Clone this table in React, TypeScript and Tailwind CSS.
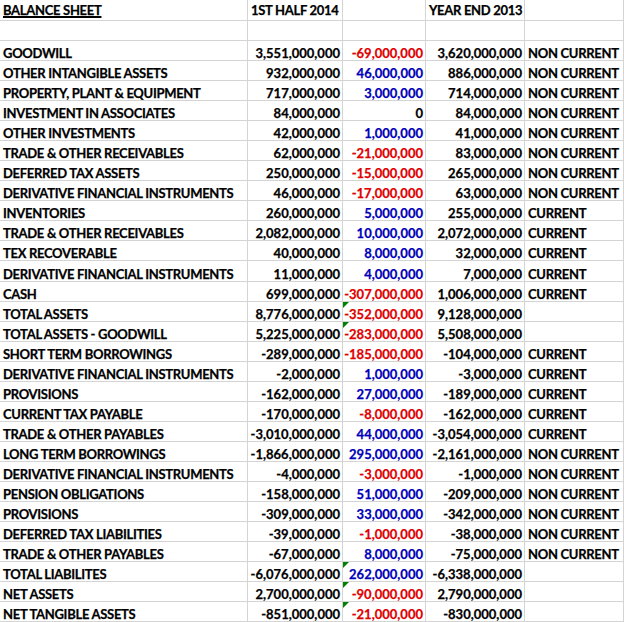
type Tone = "red" | "blue" | "black";

interface Row {
  label: string;
  half: string;
  diff: string;
  tone: Tone;
  year: string;
  kind?: string;
  flag?: boolean;
  tall?: boolean;
}

const rows: Row[] = [
  { label: "GOODWILL", half: "3,551,000,000", diff: "-69,000,000", tone: "red", year: "3,620,000,000", kind: "NON CURRENT" },
  { label: "OTHER INTANGIBLE ASSETS", half: "932,000,000", diff: "46,000,000", tone: "blue", year: "886,000,000", kind: "NON CURRENT" },
  { label: "PROPERTY, PLANT & EQUIPMENT", half: "717,000,000", diff: "3,000,000", tone: "blue", year: "714,000,000", kind: "NON CURRENT" },
  { label: "INVESTMENT IN ASSOCIATES", half: "84,000,000", diff: "0", tone: "black", year: "84,000,000", kind: "NON CURRENT" },
  { label: "OTHER INVESTMENTS", half: "42,000,000", diff: "1,000,000", tone: "blue", year: "41,000,000", kind: "NON CURRENT" },
  { label: "TRADE & OTHER RECEIVABLES", half: "62,000,000", diff: "-21,000,000", tone: "red", year: "83,000,000", kind: "NON CURRENT" },
  { label: "DEFERRED TAX ASSETS", half: "250,000,000", diff: "-15,000,000", tone: "red", year: "265,000,000", kind: "NON CURRENT" },
  { label: "DERIVATIVE FINANCIAL INSTRUMENTS", half: "46,000,000", diff: "-17,000,000", tone: "red", year: "63,000,000", kind: "NON CURRENT" },
  { label: "INVENTORIES", half: "260,000,000", diff: "5,000,000", tone: "blue", year: "255,000,000", kind: "CURRENT" },
  { label: "TRADE & OTHER RECEIVABLES", half: "2,082,000,000", diff: "10,000,000", tone: "blue", year: "2,072,000,000", kind: "CURRENT" },
  { label: "TEX RECOVERABLE", half: "40,000,000", diff: "8,000,000", tone: "blue", year: "32,000,000", kind: "CURRENT" },
  { label: "DERIVATIVE FINANCIAL INSTRUMENTS", half: "11,000,000", diff: "4,000,000", tone: "blue", year: "7,000,000", kind: "CURRENT", tall: true },
  { label: "CASH", half: "699,000,000", diff: "-307,000,000", tone: "red", year: "1,006,000,000", kind: "CURRENT" },
  { label: "TOTAL ASSETS", half: "8,776,000,000", diff: "-352,000,000", tone: "red", year: "9,128,000,000", flag: true },
  { label: "TOTAL ASSETS - GOODWILL", half: "5,225,000,000", diff: "-283,000,000", tone: "red", year: "5,508,000,000", flag: true },
  { label: "SHORT TERM BORROWINGS", half: "-289,000,000", diff: "-185,000,000", tone: "red", year: "-104,000,000", kind: "CURRENT" },
  { label: "DERIVATIVE FINANCIAL INSTRUMENTS", half: "-2,000,000", diff: "1,000,000", tone: "blue", year: "-3,000,000", kind: "CURRENT" },
  { label: "PROVISIONS", half: "-162,000,000", diff: "27,000,000", tone: "blue", year: "-189,000,000", kind: "CURRENT" },
  { label: "CURRENT TAX PAYABLE", half: "-170,000,000", diff: "-8,000,000", tone: "red", year: "-162,000,000", kind: "CURRENT" },
  { label: "TRADE & OTHER PAYABLES", half: "-3,010,000,000", diff: "44,000,000", tone: "blue", year: "-3,054,000,000", kind: "CURRENT" },
  { label: "LONG TERM BORROWINGS", half: "-1,866,000,000", diff: "295,000,000", tone: "blue", year: "-2,161,000,000", kind: "NON CURRENT" },
  { label: "DERIVATIVE FINANCIAL INSTRUMENTS", half: "-4,000,000", diff: "-3,000,000", tone: "red", year: "-1,000,000", kind: "NON CURRENT" },
  { label: "PENSION OBLIGATIONS", half: "-158,000,000", diff: "51,000,000", tone: "blue", year: "-209,000,000", kind: "NON CURRENT" },
  { label: "PROVISIONS", half: "-309,000,000", diff: "33,000,000", tone: "blue", year: "-342,000,000", kind: "NON CURRENT" },
  { label: "DEFERRED TAX LIABILITIES", half: "-39,000,000", diff: "-1,000,000", tone: "red", year: "-38,000,000", kind: "NON CURRENT" },
  { label: "TRADE & OTHER PAYABLES", half: "-67,000,000", diff: "8,000,000", tone: "blue", year: "-75,000,000", kind: "NON CURRENT" },
  { label: "TOTAL LIABILITES", half: "-6,076,000,000", diff: "262,000,000", tone: "blue", year: "-6,338,000,000", flag: true },
  { label: "NET ASSETS", half: "2,700,000,000", diff: "-90,000,000", tone: "red", year: "2,790,000,000", flag: true },
  { label: "NET TANGIBLE ASSETS", half: "-851,000,000", diff: "-21,000,000", tone: "red", year: "-830,000,000", flag: true },
];

const toneClass: Record<Tone, string> = {
  red: "text-[#e00000]",
  blue: "text-[#0000b8]",
  black: "text-black",
};

const grid = "grid grid-cols-[248px_95px_83px_99px_99px]";
const cell = "border-r border-b border-[#d4d4d4] flex items-end whitespace-nowrap overflow-hidden";
const text = `${cell} pl-[3px] tracking-[-0.3px]`;
const num = `${cell} justify-end pr-[2px]`;

export default function App() {
  return (
    <div
      className="w-[624px] h-[622px] bg-white text-black text-[13px] leading-[14px] font-bold overflow-hidden [-webkit-text-stroke:0.25px]"
      style={{ fontFamily: "Lato, 'Liberation Sans', sans-serif" }}
    >
      {/* Header */}
      <div className={`${grid} h-[21px]`}>
        <div className={`${text} pb-[3px]`}>
          <span className="underline underline-offset-[1px] decoration-2">BALANCE SHEET</span>
        </div>
        <div className={`${text} pb-[3px]`}>1ST HALF 2014</div>
        <div className={cell} />
        <div className={`${text} pb-[3px]`}>YEAR END 2013</div>
        <div className={cell} />
      </div>
      <div className={`${grid} h-5`}>
        <div className={cell} />
        <div className={cell} />
        <div className={cell} />
        <div className={cell} />
        <div className={cell} />
      </div>

      {rows.map((r, i) => (
        <div key={i} className={`${grid} ${r.tall ? "h-[21px]" : "h-5"}`}>
          <div className={text}>{r.label}</div>
          <div className={num}>{r.half}</div>
          <div className={`${num} relative ${toneClass[r.tone]}`}>
            {r.flag && (
              <span className="absolute left-0 top-0 w-0 h-0 border-t-[6px] border-r-[6px] border-t-[#008000] border-r-transparent" />
            )}
            {r.diff}
          </div>
          <div className={num}>{r.year}</div>
          <div className={text}>{r.kind ?? ""}</div>
        </div>
      ))}
    </div>
  );
}
